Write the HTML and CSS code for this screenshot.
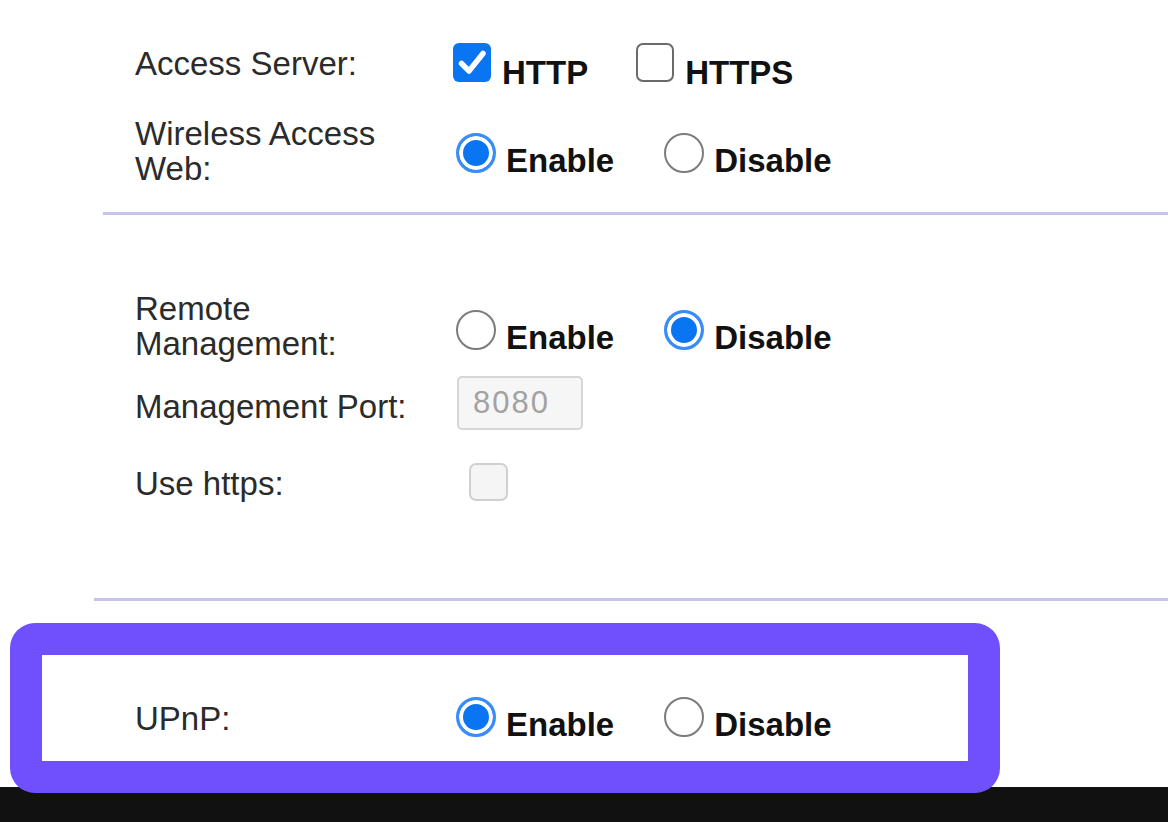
FILE: index.html
```html
<!DOCTYPE html>
<html lang="en">
<head>
<meta charset="utf-8">
<title>Administration</title>
<link rel="stylesheet" href="styles.css">
</head>
<body>
<div class="page">
  <section class="group">
    <div class="row row-server">
      <div class="label">Access Server:</div>
      <div class="controls controls-check">
        <label class="opt"><span class="box checked"><svg viewBox="0 0 38 39" width="38" height="39"><path d="M8.5 20.5 L16 28 L30 10.5" fill="none" stroke="#fff" stroke-width="5.5" stroke-linecap="round" stroke-linejoin="round"/></svg></span><span class="opt-text">HTTP</span></label>
        <label class="opt"><span class="box"></span><span class="opt-text">HTTPS</span></label>
      </div>
    </div>
    <div class="row row-wireless">
      <div class="label">Wireless Access Web:</div>
      <div class="controls controls-radio">
        <label class="opt"><span class="radio checked"></span><span class="opt-text">Enable</span></label>
        <label class="opt"><span class="radio"></span><span class="opt-text">Disable</span></label>
      </div>
    </div>
  </section>

  <div class="divider divider-first"></div>

  <section class="group">
    <div class="row row-remote">
      <div class="label">Remote Management:</div>
      <div class="controls controls-radio">
        <label class="opt"><span class="radio"></span><span class="opt-text">Enable</span></label>
        <label class="opt"><span class="radio checked"></span><span class="opt-text">Disable</span></label>
      </div>
    </div>
    <div class="row row-port">
      <div class="label">Management Port:</div>
      <div class="controls">
        <div class="port-input">8080</div>
      </div>
    </div>
    <div class="row row-https">
      <div class="label">Use https:</div>
      <div class="controls">
        <span class="box disabled"></span>
      </div>
    </div>
  </section>

  <div class="divider divider-second"></div>

  <section class="group">
    <div class="row row-upnp">
      <div class="label">UPnP:</div>
      <div class="controls controls-radio">
        <label class="opt"><span class="radio checked"></span><span class="opt-text">Enable</span></label>
        <label class="opt"><span class="radio"></span><span class="opt-text">Disable</span></label>
      </div>
    </div>
  </section>

  <div class="footer-bar"></div>

  <div class="highlight"></div>
</div>
</body>
</html>
```

FILE: styles.css
```css
html, body {
  margin: 0;
  padding: 0;
  background: #ffffff;
}

body {
  width: 1168px;
  height: 822px;
  overflow: hidden;
  font-family: "Liberation Sans", Arial, sans-serif;
  color: #222222;
}

.page {
  position: relative;
  padding-top: 43px;
  height: 822px;
  box-sizing: border-box;
}

.row {
  display: flex;
  align-items: flex-start;
  padding-left: 135px;
}

.label {
  width: 318px;
  flex: none;
  font-size: 33px;
  line-height: 35px;
  color: #2b2b2b;
}

.controls {
  display: flex;
  align-items: flex-end;
}

.controls-check {
  gap: 48px;
}

.controls-radio {
  gap: 50px;
  padding-left: 3px;
}

.opt {
  display: flex;
  align-items: flex-end;
}

.opt-text {
  font-size: 33px;
  line-height: 35px;
  font-weight: bold;
  color: #111111;
}

.box {
  width: 38px;
  height: 39px;
  box-sizing: border-box;
  border: 2px solid #6a6a6a;
  border-radius: 7px;
  background: #ffffff;
  margin-bottom: 8px;
  margin-right: 11px;
  flex: none;
  display: block;
}

.box.checked {
  border: none;
  background: #0a75f3;
  border-radius: 6px;
}

.box svg {
  display: block;
}

.box.disabled {
  width: 39px;
  height: 38px;
  margin: 0 0 0 16px;
  border: 2px solid #d0d0d0;
  background: #f5f5f5;
  border-radius: 7px;
}

.radio {
  width: 40px;
  height: 40px;
  box-sizing: border-box;
  border-radius: 50%;
  border: 2px solid #7c7c7c;
  background: #ffffff;
  margin-bottom: 5px;
  margin-right: 10px;
  flex: none;
  display: block;
}

.radio.checked {
  border: 3px solid #3a8cf6;
  background: #0a75f3;
  box-shadow: inset 0 0 0 4px #ffffff;
}

.row-server .label {
  margin-top: 3px;
}

.row-wireless {
  margin-top: 26px;
}

.row-wireless .controls {
  margin-top: 17px;
}

.divider {
  height: 3px;
  background: #c4c4ee;
}

.divider-first {
  margin-top: 26px;
  margin-left: 103px;
}

.row-remote {
  margin-top: 76px;
}

.row-remote .controls {
  margin-top: 19px;
}

.row-port {
  margin-top: 15px;
}

.row-port .label {
  margin-top: 13px;
}

.port-input {
  margin-left: 4px;
  width: 126px;
  height: 54px;
  box-sizing: border-box;
  border: 2px solid #d6d6d6;
  border-radius: 5px;
  background: #f6f6f6;
  padding-left: 14px;
  font-size: 31px;
  line-height: 50px;
  letter-spacing: 2px;
  color: #a2a2a2;
}

.row-https {
  margin-top: 33px;
}

.row-https .label {
  margin-top: 3px;
}

.divider-second {
  margin-top: 97px;
  margin-left: 94px;
}

.row-upnp {
  margin-top: 96px;
}

.row-upnp .label {
  margin-top: 4px;
}

.footer-bar {
  margin-top: 45px;
  height: 40px;
  background: #111111;
}

.highlight {
  position: absolute;
  left: 10px;
  top: 623px;
  width: 990px;
  height: 170px;
  box-sizing: border-box;
  border: 32px solid #704ffd;
  border-radius: 25px;
}
```
